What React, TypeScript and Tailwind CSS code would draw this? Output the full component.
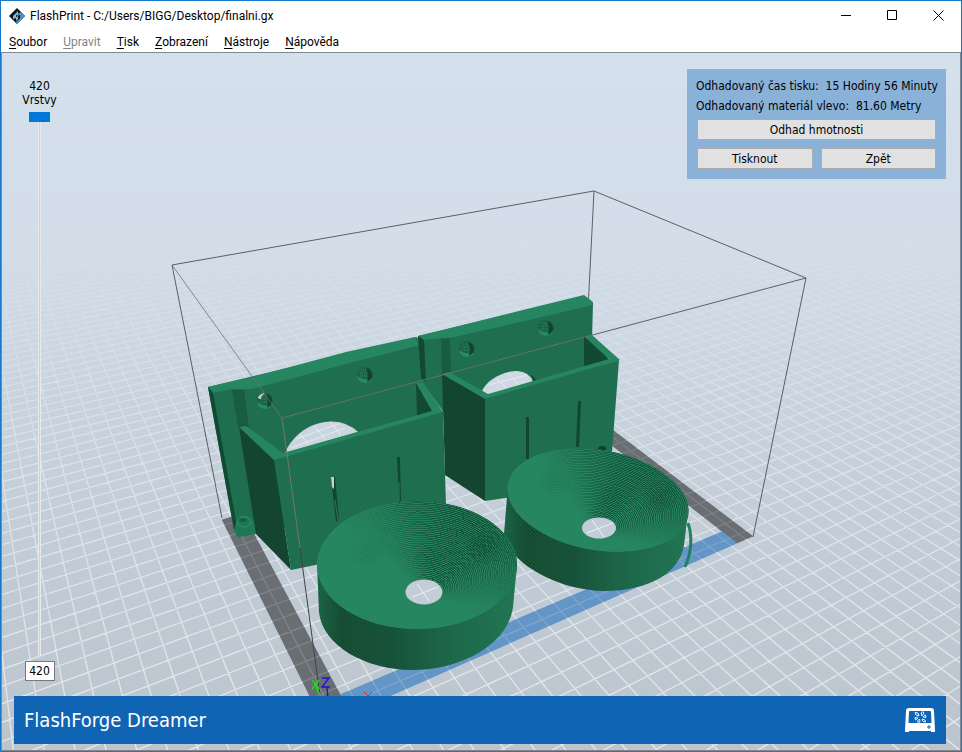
import { FC, useState } from "react";

type Point = [number, number];

// Ground plane projection: origin corner, vanishing points, depth factors per mm
const ORIGIN: Point = [324, 725];
const VANISH_X: Point = [2145, -76];
const VANISH_Y: Point = [-87, -101];
const DEPTH_X = 0.3082 / 230;
const DEPTH_Y = 0.3305 / 150;

const depth = (u: number, v: number) => 1 + DEPTH_X * u + DEPTH_Y * v;

const project = (u: number, v: number): Point => {
  const w = depth(u, v);
  const a = DEPTH_X * u;
  const b = DEPTH_Y * v;
  return [
    (ORIGIN[0] + a * VANISH_X[0] + b * VANISH_Y[0]) / w,
    (ORIGIN[1] + a * VANISH_X[1] + b * VANISH_Y[1]) / w,
  ];
};

const segment = (from: Point, to: Point) =>
  `M${from[0].toFixed(1)} ${from[1].toFixed(1)}L${to[0].toFixed(1)} ${to[1].toFixed(1)}`;

const buildGrid = () => {
  const parts: string[] = [];
  for (let u = -595; u <= 1500; u += 10) {
    const near = (0.6 - 1 - DEPTH_X * u) / DEPTH_Y;
    parts.push(segment(project(u, near), project(u, near + 1500)));
  }
  for (let v = -395; v <= 900; v += 10) {
    const near = (0.6 - 1 - DEPTH_Y * v) / DEPTH_X;
    parts.push(segment(project(near, v), project(near + 2500, v)));
  }
  return parts.join("");
};

const GRID = buildGrid();

const quad = (u0: number, v0: number, u1: number, v1: number) =>
  [project(u0, v0), project(u1, v0), project(u1, v1), project(u0, v1)]
    .map((p) => p.map((n) => n.toFixed(1)).join(","))
    .join(" ");

const range = (count: number) => Array.from({ length: count }, (_, i) => i);

interface DiscProps {
  id: string;
  cx: number;
  cy: number;
  rx: number;
  ry: number;
  tilt: number;
  holeX: number;
  holeY: number;
  holeRx: number;
  holeRy: number;
  wall: string;
}

const Disc: FC<DiscProps> = ({ id, cx, cy, rx, ry, tilt, holeX, holeY, holeRx, holeRy, wall }) => (
  <g>
    <path d={wall} fill="url(#wall)" />
    <path d={wall} fill="url(#grain)" />
    <g transform={`rotate(${tilt} ${cx} ${cy})`}>
      <clipPath id={id}>
        <ellipse cx={cx} cy={cy} rx={rx} ry={ry} />
      </clipPath>
      <ellipse cx={cx} cy={cy} rx={rx} ry={ry} fill="#268660" />
      <g clipPath={`url(#${id})`}>
        <ellipse cx={cx} cy={cy} rx={rx} ry={ry} fill="url(#bowl)" />
        {/* printed layers of the bowl */}
        <g fill="none" stroke="url(#layers)" strokeWidth="1" shapeRendering="crispEdges">
          {range(44).map((i) => {
            const t = i / 43;
            return (
              <ellipse
                key={i}
                cx={holeX + (cx - holeX) * t}
                cy={holeY + (cy - holeY) * t}
                rx={holeRx + (rx - holeRx) * t}
                ry={holeRy + (ry - holeRy) * t}
              />
            );
          })}
        </g>
        <g fill="none" stroke="#0f4a33">
          {range(6).map((i) => (
            <ellipse
              key={i}
              cx={cx + rx * 0.67}
              cy={cy - ry * 0.29}
              rx={2 + i * 3}
              ry={1.5 + i * 2.6}
              strokeOpacity={0.9 - i * 0.13}
              transform={`rotate(-30 ${cx + rx * 0.67} ${cy - ry * 0.29})`}
            />
          ))}
          {range(5).map((i) => (
            <ellipse
              key={i}
              cx={cx - rx * 0.5}
              cy={cy - ry * 0.18}
              rx={3 + i * 3}
              ry={2 + i * 2.6}
              strokeOpacity={0.24 - i * 0.04}
            />
          ))}
          {range(5).map((i) => (
            <ellipse
              key={i}
              cx={cx + rx * 0.1}
              cy={cy - ry * 0.1}
              rx={2 + i * 3}
              ry={2 + i * 2.4}
              strokeOpacity={0.3 - i * 0.05}
            />
          ))}
        </g>
      </g>
    </g>
    <ellipse cx={holeX} cy={holeY} rx={holeRx} ry={holeRy} fill="#c3cdd7" />
    <path
      d={`M${holeX - 12} ${holeY + 5}L${holeX + 14} ${holeY - 5}M${holeX - 7} ${holeY - 8}L${holeX + 5} ${holeY + 9}`}
      stroke="#eef2f6"
    />
  </g>
);

const Screw: FC<{ x: number; y: number }> = ({ x, y }) => (
  <g>
    <ellipse cx={x} cy={y} rx="8" ry="8" fill="#1b6347" />
    <path d={`M${x - 8} ${y + 1}q1 7 8 7q5 0 7-4q-8 2-15-3`} fill="#288a63" />
    <path d={`M${x + 1} ${y - 7}q7 2 6 9q-2 4-5 5q2-7-1-14`} fill="#12432f" />
    <path d={`M${x - 5} ${y - 2}h8M${x - 5} ${y + 1}h7M${x - 4} ${y - 5}h6`} stroke="#3c8f6c" strokeDasharray="1 1" />
  </g>
);

const Scene: FC = () => (
  <svg
    className="absolute inset-0 h-full w-full"
    viewBox="2 53 958 697"
    preserveAspectRatio="xMidYMid slice"
    aria-hidden="true"
  >
    <defs>
      <linearGradient id="sky" x1="0" y1="0" x2="0" y2="1">
        <stop offset="0" stopColor="#d4e0ec" />
        <stop offset="0.27" stopColor="#d2dde9" />
        <stop offset="0.5" stopColor="#c8d3de" />
        <stop offset="0.75" stopColor="#c1cbd5" />
        <stop offset="1" stopColor="#bcc5ce" />
      </linearGradient>
      <linearGradient id="fog" gradientUnits="userSpaceOnUse" x1="0" y1="210" x2="0" y2="750">
        <stop offset="0" stopColor="#fff" stopOpacity="0" />
        <stop offset="0.2" stopColor="#fff" stopOpacity="0.16" />
        <stop offset="0.5" stopColor="#fff" stopOpacity="0.4" />
        <stop offset="1" stopColor="#fff" stopOpacity="0.62" />
      </linearGradient>
      <linearGradient id="wall" x1="0" y1="0" x2="1" y2="0">
        <stop offset="0" stopColor="#1a6146" />
        <stop offset="0.12" stopColor="#14492f" />
        <stop offset="0.38" stopColor="#164f38" />
        <stop offset="0.62" stopColor="#1b6246" />
        <stop offset="1" stopColor="#217453" />
      </linearGradient>
      <linearGradient id="bowl" x1="0.2" y1="0.7" x2="0.85" y2="0.15">
        <stop offset="0.3" stopColor="#268660" />
        <stop offset="1" stopColor="#237c59" />
      </linearGradient>
      <linearGradient id="layers" x1="0.3" y1="0.75" x2="0.85" y2="0.1">
        <stop offset="0.35" stopColor="#1c6d4c" stopOpacity="0" />
        <stop offset="0.6" stopColor="#186345" stopOpacity="0.4" />
        <stop offset="1" stopColor="#0d452f" stopOpacity="0.85" />
      </linearGradient>
      <pattern id="grain" width="4" height="4" patternUnits="userSpaceOnUse">
        <path d="M0 0.5h1M2 1.5h1M1 2.5h1M3 3.5h1" stroke="#2d8a65" strokeOpacity="0.25" />
      </pattern>
    </defs>

    <rect x="2" y="53" width="958" height="697" fill="url(#sky)" />

    {/* build plate border */}
    <polygon points={quad(0, 0, 11, 150)} fill="#6a6e73" />
    <polygon points={quad(219, 0, 230, 150)} fill="#6a6e73" />
    <polygon points={quad(11, 0, 219, 11)} fill="#6495c7" />
    <path d={GRID} fill="none" stroke="url(#fog)" strokeWidth="1.3" />
    <polygon points={quad(0, 0, 11, 150)} fill="#6a6e73" fillOpacity="0.7" />
    <polygon points={quad(219, 0, 230, 150)} fill="#6a6e73" fillOpacity="0.7" />
    <polygon points={quad(11, 0, 219, 11)} fill="#6495c7" fillOpacity="0.7" />

    {/* far edges of the build volume */}
    <path
      d="M222 518L172 265L594 191L806 278L753 537M594 191L583 408M806 278L282 418"
      fill="none"
      stroke="#5c5f63"
    />

    {/* left bracket */}
    <path d="M208 387L417 337L421 346L424 384L443 415L443 500L256 533L238 537L234 530Z" fill="#1f6e4f" />
    <path d="M208 387L260 375L346 352L415 337L420 345L346 364L252 389L232 389L213 393Z" fill="#268660" />
    <path d="M208 387L213 393L238 532L234 530Z" fill="#134833" />
    <path d="M232 390L244 390L249 427L238 428Z" fill="#1a5c42" />
    <path d="M234 530q3-16 12-15l9 6l1 13l-18 3Z" fill="#1f7855" />
    <ellipse cx="244" cy="522" rx="7" ry="5" fill="none" stroke="#2f9a70" strokeDasharray="3 1" />
    <ellipse cx="243" cy="520" rx="4" ry="2" fill="#1a5f44" />
    <Screw x={265} y={401} />
    <Screw x={365} y={375} />
    <path d="M258 397q3-4 7-4q-4 3-4 6q-3 0-3-2" fill="#b9cdc9" />
    <path d="M285 453C292 435 312 421 332 421.500Q348 422 358 432L285 453Z" fill="#cbd5df" />
    <path d="M300 434l9 11M314 426l12 14M330 422l11 13M296 439l42-15M291 448l54-20" stroke="#eaeff4" strokeWidth="0.8" />

    {/* right bracket back plate */}
    <path d="M418 336L583 296L593 303L592 340L608 358L590 380L450 400L445 414L422 382Z" fill="#1f6e4f" />
    <path d="M418 336L443 330L527 309L584 295L593 302L593 305L525 321L450 338L442 338L424 340Z" fill="#268660" />
    <path d="M418 336L424 340L426 382L421 378Z" fill="#134833" />
    <path d="M441 339L450 338L451 372L442 374Z" fill="#1a5c42" />
    <Screw x={467} y={349} />
    <Screw x={546} y={328} />
    <path d="M481 393C486 379 504 371 517 371Q530 372 533 382L488 395Z" fill="#cfd9e3" />
    <path d="M533 382q0-5-3-8q5 3 6 7Z" fill="#124630" />
    <path d="M497 379l10 10M508 373l11 12M489 385l38-10" stroke="#eaeff4" strokeWidth="0.8" />
    <path d="M584 336L610 360L584 368Z" fill="#134833" />

    {/* right bracket box */}
    <path d="M442 374L485 398L485 501L445 475Z" fill="#134531" />
    <path d="M485 398L619 360L612 452L560 490L485 501Z" fill="#1f6e4f" />
    <path d="M442 374L449 372L488 394L609 359L585 337L592 335L620 360L485 399Z" fill="#268660" />
    <path d="M526 417h3v42h-3ZM578 401h3l-2 46h-3Z" fill="#124630" />
    <ellipse cx="602" cy="449" rx="4" ry="3" fill="#10402c" />

    {/* left bracket box */}
    <path d="M416 382L433 411L417 416Z" fill="#134833" />
    <path d="M239 427L274 459L291 570L256 534Z" fill="#134531" />
    <path d="M274 459L443 411L446 505L330 562L291 570Z" fill="#1f6e4f" />
    <path d="M239 427L246 426L283 453L432 411L416 383L423 382L443 412L274 460Z" fill="#268660" />
    <path d="M331 477L335 477L339 519L336 522Z" fill="#124630" />
    <path d="M331 477h3v12l-2-2Z" fill="#c9d0d6" />
    <path d="M397 457L400 457L401 501L399 502Z" fill="#124630" />
    <path d="M335 500l3 20M399 482v19" stroke="#2b8a64" strokeWidth="0.8" />

    <Disc
      id="rim-right"
      cx={598}
      cy={500}
      rx={91.5}
      ry={50}
      tilt={10}
      holeX={599}
      holeY={528}
      holeRx={17}
      holeRy={10.5}
      wall="M508 485L504 534C508 562 556 590 604 591C650 591 680 572 684 545L688 512L600 500Z"
    />
    <path d="M688 523Q695 544 685 567" fill="none" stroke="#21805b" strokeWidth="3" />
    <Disc
      id="rim-left"
      cx={417}
      cy={565}
      rx={100}
      ry={64}
      tilt={0}
      holeX={424}
      holeY={592}
      holeRx={18.5}
      holeRy={12.5}
      wall="M317 563L319 612C322 645 365 670 412 670C460 670 508 645 513 607L517 565L417 560Z"
    />

    {/* near edges of the build volume */}
    <path d="M172 265L282 418L592 335" fill="none" stroke="#77736f" strokeOpacity="0.8" />
    <path d="M282 418L300 548" fill="none" stroke="#77736f" />
    <path d="M300 548L324 725" fill="none" stroke="#3f4245" />

    <path d="M312 680l7 9M319 680l-7 9M316 687l6 12" fill="none" stroke="#1fe01f" strokeWidth="1.3" />
    <path d="M322 678h7l-7 9h8M327 687l1 12" fill="none" stroke="#1414d8" strokeWidth="1.3" />
    <path d="M364 692l4 4l4-4M368 696v5" fill="none" stroke="#e02020" />
  </svg>
);

const Logo: FC = () => (
  <svg className="size-4" viewBox="0 0 16 16" aria-hidden="true">
    <path d="M8 0L16 8L8 16L0 8Z" fill="#0c1218" />
    <path d="M10 2L16 8L8 16L6.500 14.500L11 10V7L8 8V6L12 4Z" fill="#4d8fbf" />
    <path d="M4 8L9 3v3L7 7.500V9L9 8v3L7 13V10L4 11Z" fill="#86b8dc" />
  </svg>
);

const PrinterIcon: FC = () => (
  <svg className="h-6 w-[30px]" viewBox="0 0 30 24" aria-hidden="true">
    <path
      fillRule="evenodd"
      fill="#fff"
      d="M4 0H26Q29 0 29 3L30 22V24H26V23H4V24H0V22L1 3Q1 0 4 0ZM5 3Q4 3 4 4L3.500 15H26.500L26 4Q26 3 25 3Z"
    />
    <path
      d="M14 8L11 7L10 4.500L13 5ZM17 8L16 5L18 3.500L19 5ZM18 9L20.500 7L21 9.500ZM17 11L20 12L20.500 14L18 13.500ZM14.500 11L15 14L13 14.500L12.500 13ZM13 10L10.500 12L10 9.500Z"
      stroke="#fff"
      strokeWidth="0.9"
      fill="none"
    />
    <path d="M22 19h4M24 17v4" stroke="#1064b4" />
  </svg>
);

const MENU = [
  { label: "Soubor" },
  { label: "Upravit", disabled: true },
  { label: "Tisk" },
  { label: "Zobrazení" },
  { label: "Nástroje" },
  { label: "Nápověda" },
];

const TitleBar: FC = () => (
  <header className="flex h-[29px] shrink-0 items-center justify-between bg-white pl-2">
    <div className="flex items-center gap-[5px]">
      <Logo />
      <h1 className="font-[Roboto,'Noto_Sans',sans-serif] text-[12px] leading-4">
        FlashPrint - C:/Users/BIGG/Desktop/finalni.gx
      </h1>
    </div>
    <div className="flex h-full">
      <button type="button" aria-label="Minimalizovat" className="flex w-[46px] items-center justify-center">
        <svg className="size-[11px]" viewBox="0 0 11 11">
          <path d="M0 5.500h10" stroke="#000" />
        </svg>
      </button>
      <button type="button" aria-label="Maximalizovat" className="flex w-[46px] items-center justify-center">
        <svg className="size-[11px]" viewBox="0 0 11 11">
          <path d="M0.500 0.500h9v9h-9Z" stroke="#000" fill="none" />
        </svg>
      </button>
      <button type="button" aria-label="Zavřít" className="flex w-[46px] items-center justify-center">
        <svg className="size-[11px]" viewBox="0 0 11 11">
          <path d="M0.500 0.500l10 10M10.500 0.500l-10 10" stroke="#000" />
        </svg>
      </button>
    </div>
  </header>
);

const MenuBar: FC = () => (
  <nav className="flex h-[22px] shrink-0 items-center gap-4 bg-white px-2 pt-[2px] font-[Roboto,'Noto_Sans',sans-serif] text-[12px] leading-4">
    {MENU.map(({ label, disabled }) => (
      <button key={label} type="button" disabled={disabled} className="disabled:text-[#838383]">
        <span className="underline underline-offset-2">{label[0]}</span>
        {label.slice(1)}
      </button>
    ))}
  </nav>
);

const LayerSlider: FC = () => {
  const [layer, setLayer] = useState(420);

  return (
    <div className="flex w-[35px] flex-col items-center">
      <label htmlFor="layer" className="text-center leading-[14px]">
        {layer}
        <br />
        Vrstvy
      </label>
      <input
        id="layer"
        type="range"
        min={1}
        max={420}
        value={layer}
        onChange={(e) => setLayer(Number(e.target.value))}
        className="mt-[5px] min-h-0 w-[21px] flex-1 appearance-none bg-[linear-gradient(#d0d0d0,#d0d0d0),linear-gradient(#e7eaea,#e7eaea)] bg-[length:1px_100%,3px_100%] bg-center bg-no-repeat [direction:rtl] [writing-mode:vertical-lr] [&::-webkit-slider-thumb]:h-[10px] [&::-webkit-slider-thumb]:w-[21px] [&::-webkit-slider-thumb]:appearance-none [&::-webkit-slider-thumb]:bg-[#0078d7]"
      />
      <input
        type="text"
        aria-label="Vrstva"
        value={layer}
        onChange={(e) => setLayer(Number(e.target.value) || 1)}
        className="mt-[5px] h-5 w-[30px] border border-[#7a7a7a] bg-white text-center"
      />
    </div>
  );
};

const EstimatePanel: FC = () => (
  <section className="flex w-[259px] flex-col bg-[#8ab1d8] px-[9px] pt-[7px] pb-[10px]">
    <p className="leading-5 whitespace-nowrap">Odhadovaný čas tisku: &nbsp;15 Hodiny 56 Minuty</p>
    <p className="leading-5 whitespace-nowrap">Odhadovaný materiál vlevo: &nbsp;81.60 Metry</p>
    <div className="mx-px mt-[3px] grid grid-cols-2 gap-2">
      <button type="button" className="col-span-2 h-[21px] border border-[#adadad] bg-[#e1e1e1]">
        Odhad hmotnosti
      </button>
      <button type="button" className="h-[21px] border border-[#adadad] bg-[#e1e1e1]">
        Tisknout
      </button>
      <button type="button" className="h-[21px] border border-[#adadad] bg-[#e1e1e1]">
        Zpět
      </button>
    </div>
  </section>
);

const App: FC = () => (
  <div className="flex h-screen flex-col border border-[#1979ca] text-black">
    <TitleBar />
    <MenuBar />
    <main className="relative min-h-0 flex-1 overflow-hidden border border-[#828790] font-['DejaVu_Sans_Condensed','Noto_Sans',sans-serif] text-[12px]">
      <Scene />
      <div className="relative flex h-full flex-col px-3 pt-4 pb-[6px]">
        <div className="flex min-h-0 flex-1 items-start justify-between pr-[2px]">
          <div className="flex h-full pt-[10px] pb-[15px] pl-2">
            <LayerSlider />
          </div>
          <EstimatePanel />
        </div>
        <footer className="mr-[2px] flex h-12 shrink-0 items-center justify-between bg-[#1064b4] pr-[11px] pl-[10px] text-white">
          <span className="text-[20px] leading-6">FlashForge Dreamer</span>
          <PrinterIcon />
        </footer>
      </div>
    </main>
  </div>
);

export default App;
